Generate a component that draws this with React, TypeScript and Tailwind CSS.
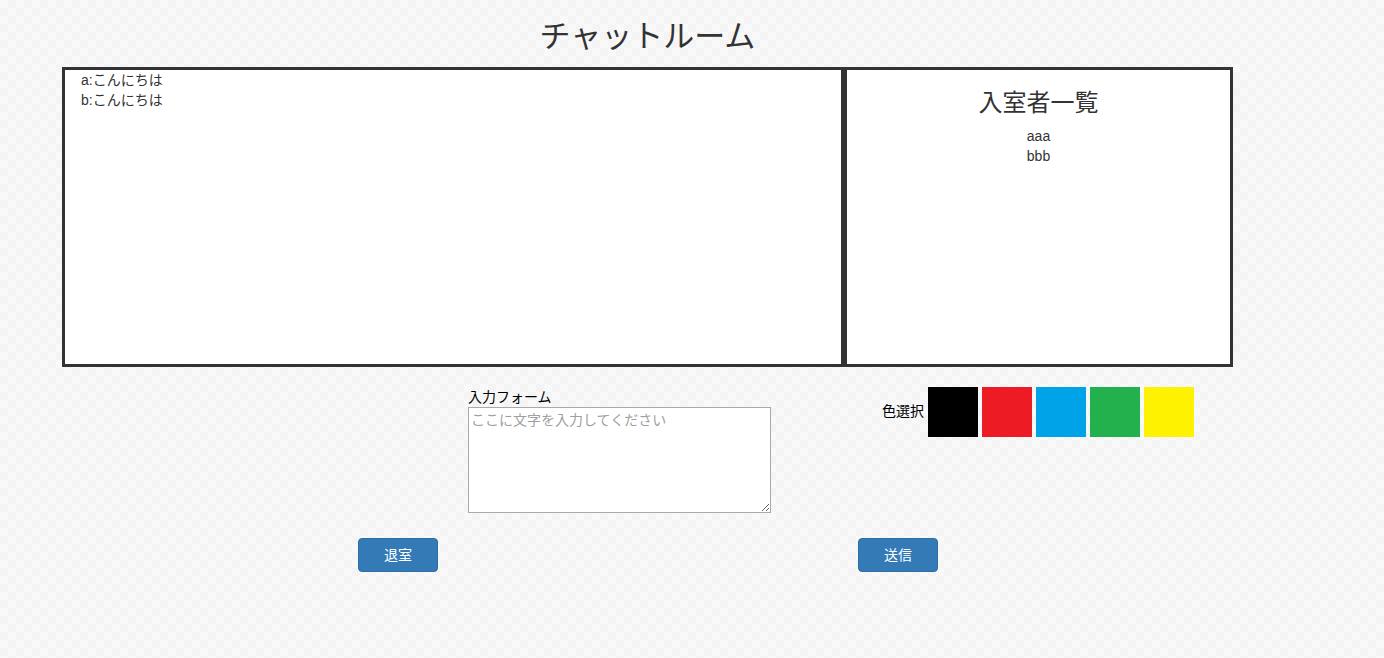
import React from "react";

const colors = ["#000000", "#ed1c24", "#00a2e8", "#22b14c", "#fff200"];

export default function App() {
  return (
    <div
      className="min-h-[658px] w-full text-[#333] bg-[repeating-conic-gradient(#f4f4f4_0_25%,#f9f9f9_0_50%)] bg-[length:16px_16px]"
      style={{ fontFamily: '"Liberation Sans", "Noto Sans CJK JP", sans-serif' }}
    >
      <div className="ml-[62px] w-[1171px]">
        <h2 className="pt-[20px] mb-[14px] text-center text-[31px] leading-[33px] font-normal">
          チャットルーム
        </h2>
        <div className="flex h-[300px]">
          <div className="w-[782px] border-[3px] border-[#333] bg-white px-[16px] text-[14px] leading-[20px]">
            <div>a:こんにちは</div>
            <div>b:こんにちは</div>
          </div>
          <div className="w-[389px] border-[3px] border-[#333] bg-white text-center">
            <h3 className="mt-[20px] mb-[10px] text-[24px] leading-[26px] font-normal">入室者一覧</h3>
            <div className="text-[14px] leading-[20px]">
              <div>aaa</div>
              <div>bbb</div>
            </div>
          </div>
        </div>
        <div className="mt-[20px] flex items-start">
          <div className="ml-[406px] flex flex-col">
            <label className="text-[14px] leading-[20px] text-black">入力フォーム</label>
            <textarea
              className="h-[106px] w-[303px] border border-[#a9a9a9] bg-white px-[2px] py-[2px] text-[14px] leading-[20px] text-black placeholder:text-[#a0a0a0] outline-none"
              placeholder="ここに文字を入力してください"
            />
          </div>
          <div className="ml-[111px] flex items-center">
            <span className="mr-[4px] mt-[-2px] text-[14px] leading-[20px] text-black">色選択</span>
            <div className="flex gap-[4px]">
              {colors.map((c) => (
                <div key={c} className="h-[50px] w-[50px]" style={{ backgroundColor: c }} />
              ))}
            </div>
          </div>
        </div>
        <div className="mt-[25px] flex">
          <button className="ml-[296px] h-[34px] w-[80px] rounded-[4px] border border-[#2e6da4] bg-[#337ab7] text-[14px] text-white">
            退室
          </button>
          <button className="ml-[420px] h-[34px] w-[80px] rounded-[4px] border border-[#2e6da4] bg-[#337ab7] text-[14px] text-white">
            送信
          </button>
        </div>
      </div>
    </div>
  );
}
